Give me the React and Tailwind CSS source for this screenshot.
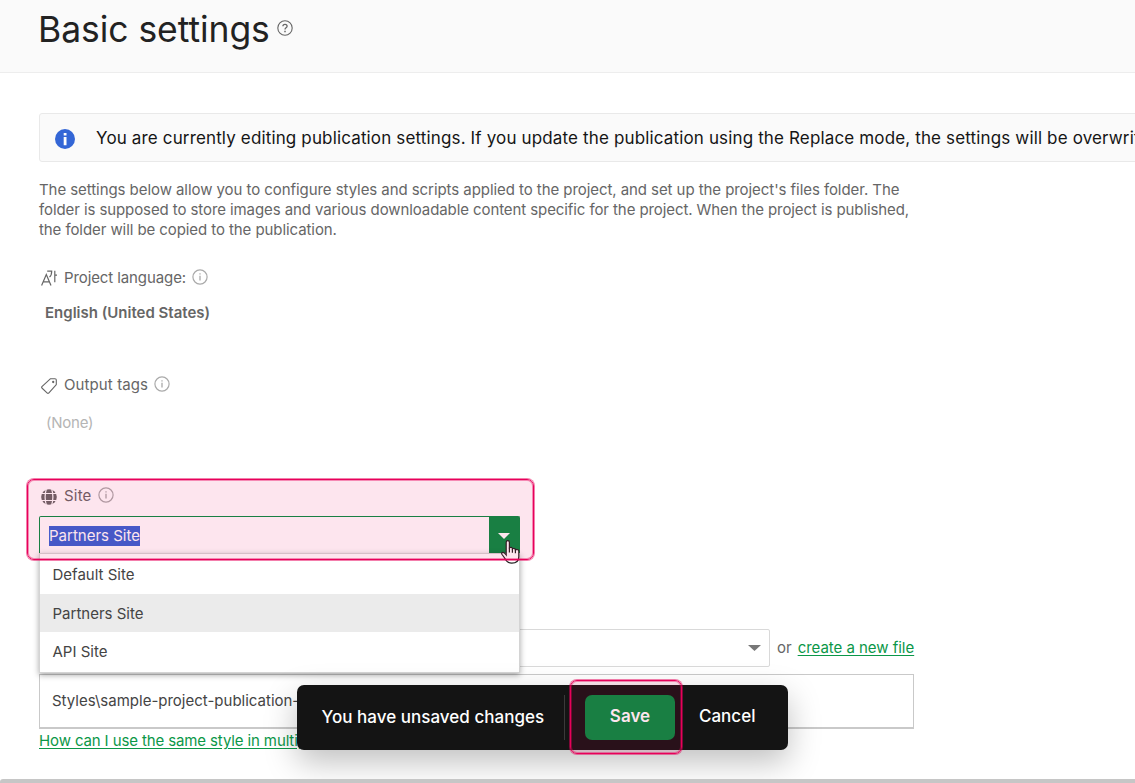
import React, { useState } from 'react'

const sites = ['Default Site', 'Partners Site', 'API Site']

export default function App() {
  const [selected] = useState('Partners Site')

  return (
    <div className="relative w-[1135px] h-[783px] overflow-hidden bg-white font-['Inter',sans-serif] text-[15px] leading-5 text-[#666]">
      {/* Page header */}
      <header className="h-[73px] flex items-start pl-[38px] bg-[#fafafa] border-b border-[#ededed]">
        <h1 className="mt-[9px] w-[239px] text-[35.5px] leading-[42px] tracking-[-0.06px] text-[#222] whitespace-nowrap">Basic settings</h1>
        <HelpIcon />
      </header>

      <main className="pl-[39px] pt-10">
        {/* Notice */}
        <div className="w-[1160px] h-[49px] flex items-center pl-[15px] gap-[21px] rounded-[3px] bg-[#fafafa] border border-[#e9e9e9] text-[17px] tracking-[0.145px] text-[#151515] whitespace-nowrap">
          <NoticeIcon />
          <span>
            You are currently editing publication settings. If you update the publication using the Replace mode, the settings will be overwritten.
          </span>
        </div>

        <p className="mt-[18px] whitespace-nowrap">
          <span className="block tracking-[-0.065px]">The settings below allow you to configure styles and scripts applied to the project, and set up the project's files folder. The</span>
          <span className="block tracking-[-0.09px]">folder is supposed to store images and various downloadable content specific for the project. When the project is published,</span>
          <span className="block tracking-[-0.08px]">the folder will be copied to the publication.</span>
        </p>

        {/* Project language */}
        <section className="mt-7">
          <FieldLabel icon={<LanguageIcon />} text="Project language:" width="w-[122px]" tracking="tracking-[-0.1px]" />
          <div className="mt-[15px] pl-[6px] font-semibold"><span>English (United States)</span></div>
        </section>

        {/* Output tags */}
        <section className="mt-[52px]">
          <FieldLabel icon={<TagIcon />} text="Output tags" width="w-[84px]" tracking="tracking-[0.1px]" />
          <div className="mt-[18px] pl-[7px] text-[#b5b5b5] tracking-[-0.25px]"><span>(None)</span></div>
        </section>

        {/* Site */}
        <section className="mt-[53px]">
          <FieldLabel icon={<GlobeIcon />} text="Site" width="w-[28px]" tracking="tracking-[0.2px]" />
          <div className="relative mt-[10px] w-[481px]">
            <div className="h-[37px] flex justify-between rounded-t-[2px] border border-b-0 border-[#028e41]">
              <div className="flex items-center pt-[2px] pl-[9px]">
                <span className="bg-[#3563d4] text-white">{selected}</span>
              </div>
              <div className="w-[30px] flex items-center justify-center pt-px bg-[#028e41]">
                <Arrow className="w-3 h-[6px] fill-white" />
              </div>
            </div>
            <ul className="absolute z-10 top-[37px] left-0 w-[481px] h-[120px] pt-[2px] bg-white border border-[#d4d4d4] shadow-[0_2px_6px_rgba(0,0,0,0.35)] text-[#444]">
              {sites.map((site) => (
                <li
                  key={site}
                  className={`h-[38px] flex items-center pt-px first:pt-0 pl-[12.5px] ${site === selected ? 'bg-[#ebebeb]' : ''}`}
                >
                  <span>{site}</span>
                </li>
              ))}
            </ul>
          </div>
        </section>

        {/* Style file */}
        <section className="mt-[76px]">
          <div className="flex items-center">
            <div className="w-[731px] h-[38px] flex items-center justify-end pr-[8px] rounded-[2px] border border-[#d9d9d9]">
              <Arrow className="w-[13px] h-[6px] fill-[#777]" />
            </div>
            <span className="ml-[7px]">or</span>
            <a className="ml-[6px] text-[#0b9748] tracking-[-0.03px] underline underline-offset-2">create a new file</a>
          </div>
          <div className="mt-[7px] w-[875px] h-[55px] flex items-center pl-[12px] border border-[#c9c9c9] border-b-2 text-[#444]">
            <span>Styles\sample-project-publication-styles.css</span>
          </div>
          <a className="block w-fit mt-[2px] text-[#0b9748] tracking-[-0.12px] underline underline-offset-2">
            How can I use the same style in multiple projects?
          </a>
        </section>
      </main>

      {/* Unsaved changes bar */}
      <div className="absolute z-20 left-[297px] top-[685px] w-[491px] h-[65px] flex items-center rounded-[7px] bg-[#141414] text-white text-[17px] font-medium shadow-[0_12px_32px_rgba(0,0,0,0.25)]">
        <span className="ml-[24.5px] -mt-[2px] w-[242.5px] tracking-[0.03px] whitespace-nowrap">You have unsaved changes</span>
        <div className="w-px h-[45px] bg-[#3a3a3a]" />
        <button className="ml-[20px] w-[90px] h-[45px] pb-[3px] rounded-[7px] bg-[#028e41] font-semibold">Save</button>
        <button className="ml-[24px] -mt-[3px]">Cancel</button>
      </div>

      <HandCursor />

      {/* Highlights */}
      <div className="absolute z-40 left-[27px] top-[479px] w-[507px] h-[81px] rounded-[7px] border border-[#e8005a] bg-[#e8005a]/10 shadow-[0_0_0_1px_#e8005a80,inset_0_0_0_1px_#e8005a66]" />
      <div className="absolute z-40 left-[570px] top-[680px] w-[112px] h-[74px] rounded-[7px] border border-[#e8005a] bg-[#e8005a]/10 shadow-[0_0_0_1px_#e8005a80,inset_0_0_0_1px_#e8005a66]" />

      <div className="absolute z-30 left-0 bottom-0 w-full h-1 rounded-tl-[3px] bg-[#c6c6c6]" />
    </div>
  )
}

function FieldLabel({ icon, text, width, tracking }) {
  return (
    <div className="h-5 flex items-center whitespace-nowrap">
      <div className="w-[25px] pl-[2px]">{icon}</div>
      <span className={`${width} ${tracking}`}>{text}</span>
      <InfoIcon />
    </div>
  )
}

function Arrow({ className }) {
  return (
    <svg className={className} viewBox="0 0 12 6" preserveAspectRatio="none">
      <path d="M0 0h12L6 6z" />
    </svg>
  )
}

function HelpIcon() {
  return (
    <svg className="mt-5 w-4 h-4" viewBox="0 0 16 16" fill="none" stroke="#666" strokeWidth="1.1">
      <circle cx="8" cy="8" r="7.2" />
      <path d="M5.9 6.3c0-1.2.9-2 2.1-2s2.1.8 2.1 1.9c0 1.6-2.1 1.5-2.1 3.2" strokeWidth="1.3" />
      <path d="M8 10.7v1.5" strokeWidth="1.5" />
    </svg>
  )
}

function NoticeIcon() {
  return (
    <svg className="w-5 h-5 mt-[2px]" viewBox="0 0 20 20">
      <circle cx="10" cy="10" r="10" fill="#3366d6" />
      <path d="M8.7 4h2.8v2.6H8.7zM8.7 8h2.8v8.2H8.7z" fill="#fff" />
    </svg>
  )
}

function InfoIcon() {
  return (
    <svg className="ml-[6px] -mt-[2px] w-4 h-4" viewBox="0 0 16 16" fill="none" stroke="#aaa">
      <circle cx="8" cy="8" r="7.1" strokeWidth="1.2" />
      <path d="M8 6.8v4.6M8 4.2v1.4" strokeWidth="1.3" />
    </svg>
  )
}

function LanguageIcon() {
  return (
    <svg className="w-4 h-4" viewBox="0 0 16 16" fill="none" stroke="#666" strokeWidth="1.2">
      <path d="M.6 15.5 5.3 4.6l4.7 10.9M2.3 11.8h6" />
      <path d="M6.2 1.2h4.5c0 3-.6 4.6-2.2 5.8M13.8.8v11.4M13.8 5.2H16" />
    </svg>
  )
}

function TagIcon() {
  return (
    <svg className="w-4 h-4 mt-px" viewBox="0 0 16 16" fill="none" stroke="#666" strokeWidth="1.1" strokeLinejoin="round">
      <path d="M9.3.8 14 .7q1.3 0 1.3 1.3v4.6L7.7 15.1q-.7.6-1.4 0L.9 10q-.6-.7 0-1.4z" />
      <circle cx="12.2" cy="4" r=".6" />
    </svg>
  )
}

function GlobeIcon() {
  return (
    <svg className="w-4 h-4 mt-[2px]" viewBox="0 0 16 16">
      <circle cx="8" cy="8" r="7.8" fill="#666" />
      <path d="M0 4.5h16M0 11.5h16M5.3 0C3.8 5 3.8 11 5.3 16M10.7 0c1.5 5 1.5 11 0 16" fill="none" stroke="#fff" strokeWidth="1.2" />
    </svg>
  )
}

function HandCursor() {
  return (
    <svg className="absolute z-30 left-[501px] top-[540px] w-[19px] h-6" viewBox="0 0 19 24">
      <path
        d="M5.2 15V2.2Q5.3.7 6.8.7T8.4 2.2v5.5q3-.9 3 1 2.7-.7 3 1 3.4-.5 3.4 1.5v5.6q0 6.4-7 6.4-4.8 0-7.2-5.2L.9 14.3q-.7-1.5.8-1.9 1.3-.2 3.5 2.6z"
        fill="#fff"
        stroke="#222"
        strokeWidth="1.2"
      />
      <path d="M8.4 7.7v4.8M11.4 8.7v4M14.4 9.7v3.5" stroke="#222" strokeWidth="1.2" />
    </svg>
  )
}
